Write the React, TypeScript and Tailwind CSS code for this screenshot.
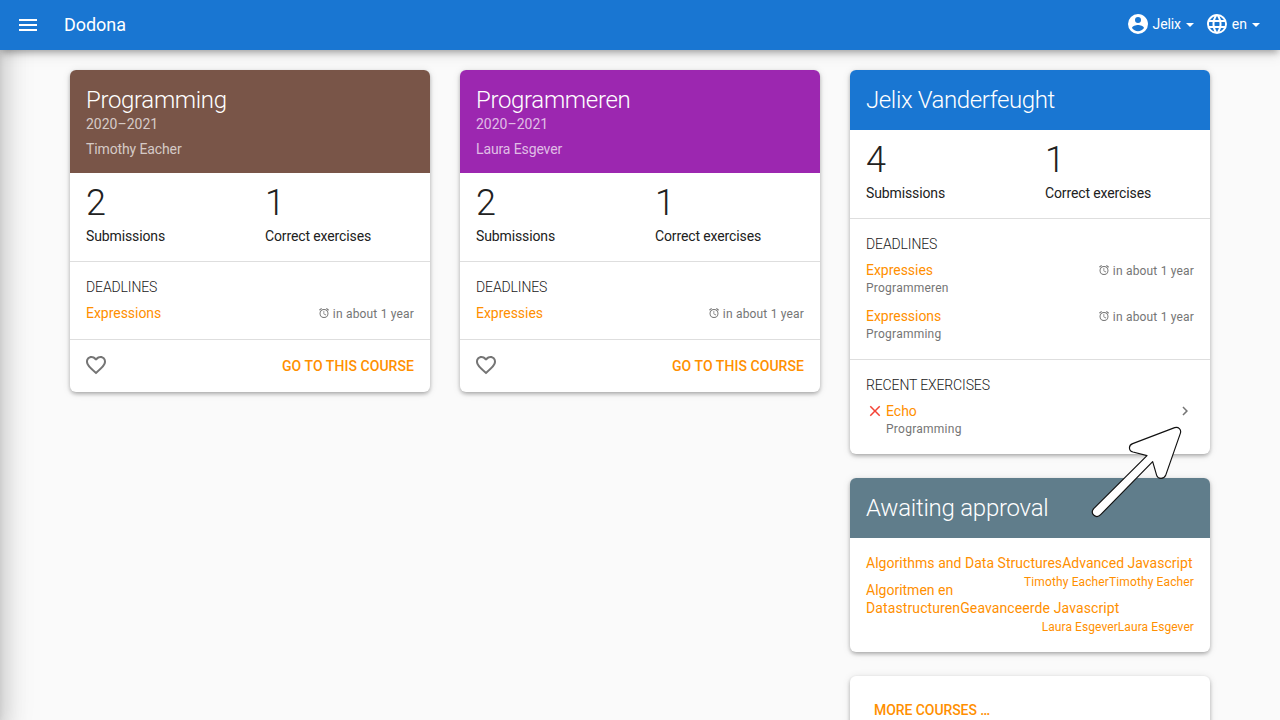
import type { ReactNode } from "react";

const icons = {
  menu: "M3,6H21V8H3V6M3,11H21V13H3V11M3,16H21V18H3V16Z",
  account:
    "M12,19.2C9.5,19.2 7.29,17.92 6,16C6.03,14 10,12.9 12,12.9C14,12.9 17.97,14 18,16C16.71,17.92 14.5,19.2 12,19.2M12,5A3,3 0 0,1 15,8A3,3 0 0,1 12,11A3,3 0 0,1 9,8A3,3 0 0,1 12,5M12,2A10,10 0 0,0 2,12A10,10 0 0,0 12,22A10,10 0 0,0 22,12C22,6.47 17.5,2 12,2Z",
  web: "M16.36,14C16.44,13.34 16.5,12.68 16.5,12C16.5,11.32 16.44,10.66 16.36,10H19.74C19.9,10.64 20,11.31 20,12C20,12.69 19.9,13.36 19.74,14M14.59,19.56C15.19,18.45 15.65,17.25 15.97,16H18.92C17.96,17.65 16.43,18.93 14.59,19.56M14.34,14H9.66C9.56,13.34 9.5,12.68 9.5,12C9.5,11.32 9.56,10.65 9.66,10H14.34C14.43,10.65 14.5,11.32 14.5,12C14.5,12.68 14.43,13.34 14.34,14M12,19.96C11.17,18.76 10.5,17.43 10.09,16H13.91C13.5,17.43 12.83,18.76 12,19.96M8,8H5.08C6.03,6.34 7.57,5.06 9.4,4.44C8.8,5.55 8.35,6.75 8,8M5.08,16H8C8.35,17.25 8.8,18.45 9.4,19.56C7.57,18.93 6.03,17.65 5.08,16M4.26,14C4.1,13.36 4,12.69 4,12C4,11.31 4.1,10.64 4.26,10H7.64C7.56,10.66 7.5,11.32 7.5,12C7.5,12.68 7.56,13.34 7.64,14M12,4.03C12.83,5.23 13.5,6.57 13.91,8H10.09C10.5,6.57 11.17,5.23 12,4.03M18.92,8H15.97C15.65,6.75 15.19,5.55 14.59,4.44C16.43,5.07 17.96,6.34 18.92,8M12,2C6.47,2 2,6.5 2,12A10,10 0 0,0 12,22A10,10 0 0,0 22,12A10,10 0 0,0 12,2Z",
  alarm:
    "M12,20A7,7 0 0,1 5,13A7,7 0 0,1 12,6A7,7 0 0,1 19,13A7,7 0 0,1 12,20M12,4A9,9 0 0,0 3,13A9,9 0 0,0 12,22A9,9 0 0,0 21,13A9,9 0 0,0 12,4M12.5,8H11V14L15.75,16.85L16.5,15.62L12.5,13.25V8M7.88,3.39L6.6,1.86L2,5.71L3.29,7.24L7.88,3.39M22,5.72L17.4,1.86L16.11,3.39L20.71,7.25L22,5.72Z",
  heart:
    "M12.1,18.55L12,18.65L11.89,18.55C7.14,14.24 4,11.39 4,8.5C4,6.5 5.5,5 7.5,5C9.04,5 10.54,6 11.07,7.36H12.93C13.46,6 14.96,5 16.5,5C18.5,5 20,6.5 20,8.5C20,11.39 16.86,14.24 12.1,18.55M16.5,3C14.76,3 13.09,3.81 12,5.08C10.91,3.81 9.24,3 7.5,3C4.42,3 2,5.41 2,8.5C2,12.27 5.4,15.36 10.55,20.03L12,21.35L13.45,20.03C18.6,15.36 22,12.27 22,8.5C22,5.41 19.58,3 16.5,3Z",
  close:
    "M19,6.41L17.59,5L12,10.59L6.41,5L5,6.41L10.59,12L5,17.59L6.41,19L12,13.41L17.59,19L19,17.59L13.41,12L19,6.41Z",
  chevron: "M8.59,16.58L13.17,12L8.59,7.41L10,6L16,12L10,18L8.59,16.58Z",
};

function Icon({ name, className }: { name: keyof typeof icons; className: string }) {
  return (
    <svg viewBox="0 0 24 24" fill="currentColor" className={`shrink-0 ${className}`}>
      <path d={icons[name]} />
    </svg>
  );
}

function Caret() {
  return (
    <svg viewBox="0 0 8 4" fill="currentColor" className="mt-[2px] ml-[5px] h-1 w-2">
      <path d="M0 0H8L4 4Z" />
    </svg>
  );
}

function Card({ children }: { children: ReactNode }) {
  return (
    <section className="overflow-hidden rounded-[6px] bg-white shadow-[0_2px_4px_-1px_rgba(0,0,0,0.2),0_2px_4px_0_rgba(0,0,0,0.14),0_1px_8px_0_rgba(0,0,0,0.1)]">
      {children}
    </section>
  );
}

function CardTitle({ children, tracking }: { children: ReactNode; tracking: string }) {
  return <h2 className={`text-2xl leading-[28px] font-light ${tracking}`}>{children}</h2>;
}

function Stats({ submissions, correct }: { submissions: number; correct: number }) {
  return (
    <div className="flex h-[88px] px-4 pt-[10px]">
      {[
        { value: submissions, label: "Submissions" },
        { value: correct, label: "Correct exercises" },
      ].map((s) => (
        <div key={s.label} className="w-[179px] shrink-0">
          <div className="text-[36px] leading-[40px] font-light">{s.value}</div>
          <div className="mt-1 leading-[18px] tracking-[-0.12px]">{s.label}</div>
        </div>
      ))}
    </div>
  );
}

function SectionTitle({ children }: { children: ReactNode }) {
  return <h4 className="mb-2 leading-[18px] font-light tracking-[-0.13px] uppercase">{children}</h4>;
}

function Deadline({ name, course }: { name: string; course?: string }) {
  return (
    <div>
      <div className="flex h-[18px] justify-between leading-[18px]">
        <a className="tracking-[-0.03px] text-[#ff8f00]">{name}</a>
        <span className="flex items-center pt-[2px] text-xs leading-[18px] tracking-[0.18px] text-[#757575]">
          <Icon name="alarm" className="mr-[3px] mb-[3px] h-3 w-3" />
          in about 1 year
        </span>
      </div>
      {course && <div className="text-xs leading-[18px] tracking-[0.24px] text-[#757575]">{course}</div>}
    </div>
  );
}

function CourseCard({ title, teacher, color, deadline }: { title: string; teacher: string; color: string; deadline: string }) {
  return (
    <Card>
      <header className={`h-[103px] px-4 pt-4 text-white ${color}`}>
        <CardTitle tracking="tracking-[-0.33px]">{title}</CardTitle>
        <div className="pt-px leading-[18px] text-white/70">2020–2021</div>
        <div className="mt-[7px] leading-[18px] tracking-[-0.12px] text-white/70">{teacher}</div>
      </header>
      <Stats submissions={2} correct={1} />
      <div className="h-[78px] border-t border-[#dedede] px-4 pt-4">
        <SectionTitle>Deadlines</SectionTitle>
        <Deadline name={deadline} />
      </div>
      <footer className="flex h-[53px] items-center justify-between border-t border-[#dedede] pr-4 pl-[14px]">
        <Icon name="heart" className="mb-[2px] h-6 w-6 text-[#757575]" />
        <a className="font-medium tracking-[0.06px] text-[#ff8f00] uppercase">Go to this course</a>
      </footer>
    </Card>
  );
}

export default function App() {
  return (
    <div className="relative h-[720px] w-[1280px] overflow-hidden bg-[#fafafa] font-['Roboto',sans-serif] text-sm text-[#212121]">
      <nav className="relative z-20 flex h-[50px] items-center justify-between bg-[#1976d2] pr-5 pl-4 text-white shadow-[0_5px_6px_-3px_rgba(0,0,0,0.2),0_3px_8px_0_rgba(0,0,0,0.14),0_3px_14px_2px_rgba(0,0,0,0.08)]">
        <div className="flex items-center">
          <Icon name="menu" className="h-6 w-6" />
          <span className="ml-6 text-[18px] leading-6 tracking-[-0.05px]">Dodona</span>
        </div>
        <div className="flex items-center pb-[2px]">
          <Icon name="account" className="mr-[3px] h-6 w-6" />
          <span className="tracking-[-0.12px]">Jelix</span>
          <Caret />
          <Icon name="web" className="mr-[3px] ml-[11px] h-6 w-6" />
          <span>en</span>
          <Caret />
        </div>
      </nav>
      <aside className="absolute top-0 left-[-260px] z-10 h-[720px] w-[260px] shadow-[0_8px_10px_-5px_rgba(0,0,0,0.2),0_16px_24px_2px_rgba(0,0,0,0.14),0_6px_30px_5px_rgba(0,0,0,0.12)]" />

      <main className="mx-[70px] grid grid-cols-3 items-start gap-[30px] pt-5">
        <CourseCard title="Programming" teacher="Timothy Eacher" color="bg-[#795548]" deadline="Expressions" />
        <CourseCard title="Programmeren" teacher="Laura Esgever" color="bg-[#9c27b0]" deadline="Expressies" />

        <div className="flex flex-col gap-6">
          <Card>
            <header className="h-[60px] bg-[#1976d2] px-4 pt-4 text-white">
              <CardTitle tracking="tracking-[-0.38px]">Jelix Vanderfeught</CardTitle>
            </header>
            <Stats submissions={4} correct={1} />
            <div className="h-[141px] border-t border-[#dedede] px-4 pt-4">
              <SectionTitle>Deadlines</SectionTitle>
              <div className="flex flex-col gap-[10px]">
                <Deadline name="Expressies" course="Programmeren" />
                <Deadline name="Expressions" course="Programming" />
              </div>
            </div>
            <div className="h-[95px] border-t border-[#dedede] px-4 pt-4">
              <SectionTitle>Recent exercises</SectionTitle>
              <div className="flex">
                <Icon name="close" className="mr-[2px] h-[18px] w-[18px] text-[#f44336]" />
                <div className="grow">
                  <div className="leading-[18px] text-[#ff8f00]">Echo</div>
                  <div className="text-xs leading-[18px] tracking-[0.26px] text-[#757575]">Programming</div>
                </div>
                <Icon name="chevron" className="h-[18px] w-[18px] text-[#757575]" />
              </div>
            </div>
          </Card>

          <Card>
            <header className="h-[60px] bg-[#607d8b] px-4 pt-4 text-white">
              <CardTitle tracking="tracking-[-0.25px]">Awaiting approval</CardTitle>
            </header>
            <div className="h-[114px] px-4 pt-4 leading-[18px] text-[#ff8f00]">
              <div className="tracking-[0.03px] whitespace-nowrap">Algorithms and Data StructuresAdvanced Javascript</div>
              <div className="mt-px mb-[-10px] text-right text-xs leading-[18px] tracking-[0.12px]">
                Timothy EacherTimothy Eacher
              </div>
              <div>
                Algoritmen en
                <br />
                <span className="tracking-[0.11px]">DatastructurenGeavanceerde Javascript</span>
              </div>
              <div className="mt-px text-right text-xs leading-[18px] tracking-[0.08px]">Laura EsgeverLaura Esgever</div>
            </div>
          </Card>

          <Card>
            <div className="px-6 py-[25px] leading-[18px] font-medium tracking-[-0.07px] text-[#ff8f00] uppercase">
              More courses …
            </div>
          </Card>
        </div>
      </main>

      <svg viewBox="0 0 450 420" className="absolute top-[390px] left-[1080px] z-30 h-[140px] w-[150px]">
        <path
          d="M158 161L284 113C295 109 305 119 301 130L257 256C252 268 234 268 230 256L218 215L62 374C48 388 29 371 41 356L201 197L159 186C145 182 145 166 158 161Z"
          fill="#fff"
          stroke="#111"
          strokeWidth="3.5"
          strokeLinejoin="round"
        />
      </svg>
    </div>
  );
}
